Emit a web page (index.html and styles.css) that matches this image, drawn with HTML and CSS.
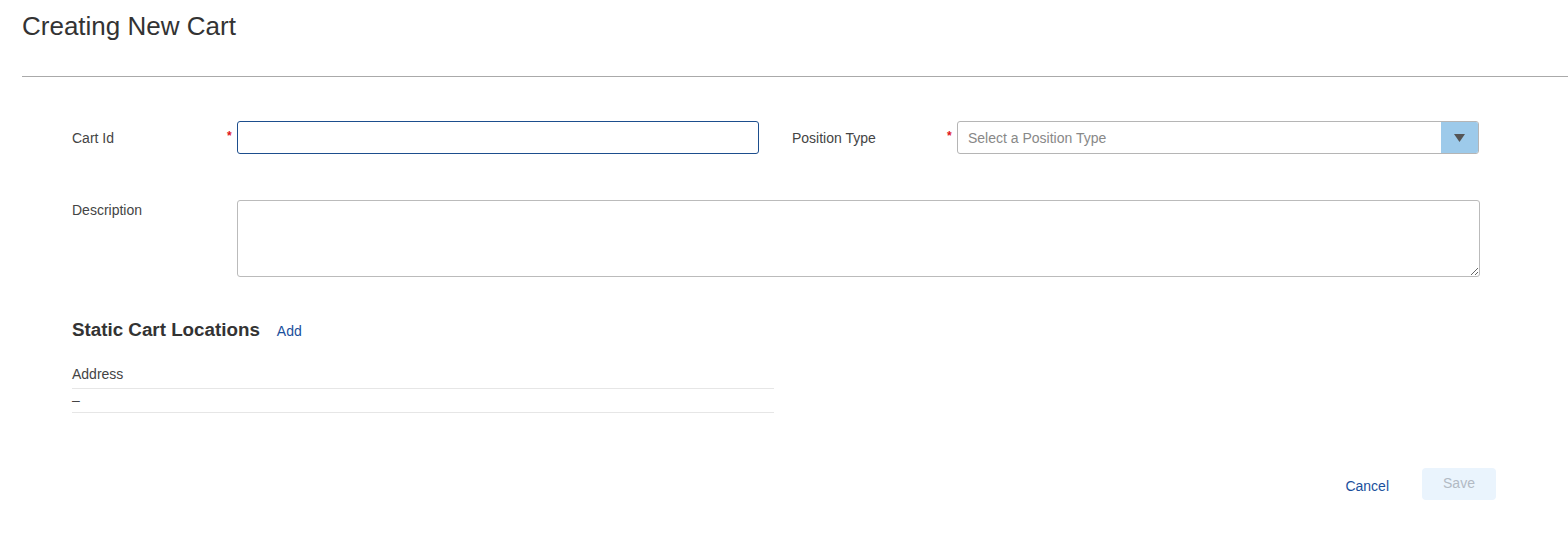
FILE: index.html
```html
<!DOCTYPE html>
<html>
<head>
<meta charset="utf-8">
<link rel="stylesheet" href="styles.css">
</head>
<body>
<div class="page">
  <header class="header">
    <h1 class="title">Creating New Cart</h1>
  </header>
  <main class="form">
    <div class="row row-top">
      <div class="field">
        <label class="label">Cart Id</label>
        <span class="star">*</span>
        <input class="input input-focus" type="text">
      </div>
      <div class="field">
        <label class="label">Position Type</label>
        <span class="star">*</span>
        <div class="select">
          <span class="placeholder">Select a Position Type</span>
          <span class="select-btn"><svg width="11" height="8" viewBox="0 0 11 8"><path d="M0 0H11L5.5 8Z" fill="#555"/></svg></span>
        </div>
      </div>
    </div>
    <div class="row row-desc">
      <label class="label label-desc">Description</label>
      <span class="star"></span>
      <textarea class="textarea"></textarea>
    </div>
    <section class="locations">
      <div class="loc-head">
        <h2 class="loc-title">Static Cart Locations</h2>
        <a class="link add">Add</a>
      </div>
      <div class="table">
        <div class="tr th">Address</div>
        <div class="tr td">–</div>
      </div>
    </section>
    <div class="actions">
      <a class="link cancel">Cancel</a>
      <button class="save" disabled>Save</button>
    </div>
  </main>
</div>
</body>
</html>
```
FILE: styles.css
```css
* { box-sizing: border-box; }
html, body { margin: 0; padding: 0; background: #fff; }
body { font-family: "Liberation Sans", Arial, sans-serif; color: #444; font-size: 14px; }
.page { width: 1568px; }
.header { margin-left: 22px; height: 77px; border-bottom: 1px solid #aaa; padding-top: 11px; }
.title { margin: 0; font-size: 26px; font-weight: normal; line-height: 30px; color: #333; }
.form { padding: 44px 72px 0 72px; }
.row { display: flex; }
.row-top { gap: 33px; align-items: center; }
.field { display: flex; align-items: center; }
.label { width: 155px; flex: none; line-height: 20px; color: #444; }
.star { width: 10px; flex: none; color: #e0141e; font-size: 12px; line-height: 12px; align-self: center; position: relative; top: -2px; font-weight: bold; }
.input { width: 522px; height: 33px; border: 1px solid #b5b5b5; border-radius: 3px; padding: 0 10px; font: inherit; outline: none; }
.input-focus { border-color: #1d4e8d; }
.select { width: 522px; height: 33px; border: 1px solid #b5b5b5; border-radius: 3px; display: flex; align-items: center; overflow: hidden; }
.placeholder { flex: 1; padding-left: 10px; color: #888; line-height: 20px; }
.select-btn { width: 37px; height: 100%; background: #9dcaea; display: flex; align-items: center; justify-content: center; }
.row-desc { margin-top: 46px; align-items: flex-start; }
.label-desc { padding-top: 0; }
.textarea { width: 1243px; height: 77px; border: 1px solid #bbb; border-radius: 3px; resize: vertical; font: inherit; margin: 0; outline: none; display: block; }
.locations { margin-top: 41px; }
.loc-head { display: flex; align-items: baseline; gap: 17px; }
.loc-title { margin: 0; font-size: 18.8px; font-weight: bold; line-height: 24px; color: #333; }
.link { color: #1a4f9c; cursor: pointer; }
.table { width: 702px; margin-top: 22px; }
.tr { line-height: 20px; border-bottom: 1px solid #e6e6e6; color: #444; }
.th { padding-bottom: 4px; }
.td { padding-top: 1px; padding-bottom: 2px; }
.actions { display: flex; justify-content: flex-end; align-items: flex-end; gap: 33px; margin-top: 55px; }
.cancel { line-height: 20px; padding-bottom: 4px; }
.save { width: 74px; height: 32px; border: none; border-radius: 4px; background: #eaf4fd; color: #b2bac4; font: inherit; font-size: 14px; padding: 0 0 2px; }
```
